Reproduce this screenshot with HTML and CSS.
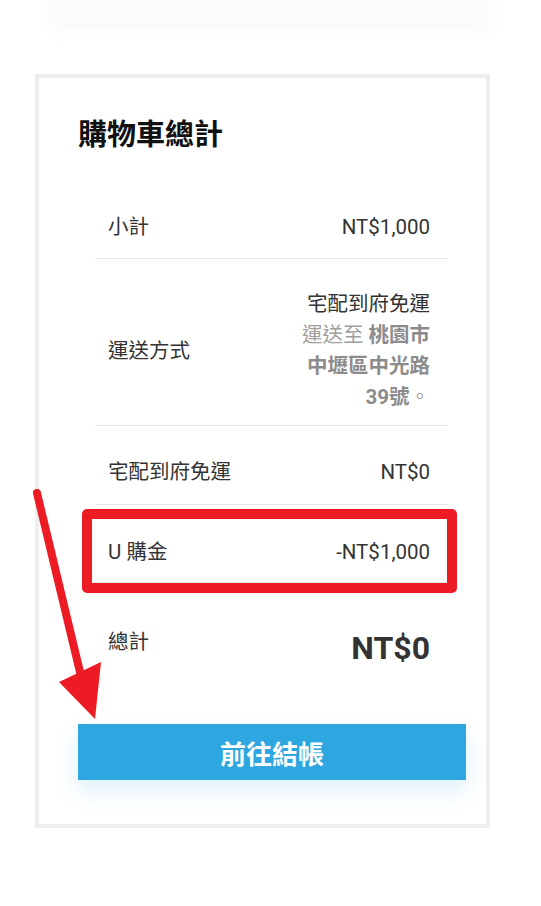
FILE: index.html
```html
<!DOCTYPE html>
<html lang="zh-TW">

<head>
    <meta charset="UTF-8">
    <meta name="viewport" content="width=device-width, initial-scale=1.0">
    <title>購物車總計</title>
    <link rel="stylesheet" href="styles.css">
</head>

<body>
    <div class="prev-card"></div>

    <div class="cart-totals">
        <h2>購物車總計</h2>

        <div class="totals">
            <div class="row row-subtotal">
                <span>小計</span>
                <span>NT$1,000</span>
            </div>
            <div class="row row-shipping">
                <span>運送方式</span>
                <span class="ship-info">宅配到府免運<br><span class="ship-to">運送至 <strong>桃園市<br>中壢區中光路<br>39號</strong>。</span></span>
            </div>
            <div class="row row-fee">
                <span>宅配到府免運</span>
                <span>NT$0</span>
            </div>
            <div class="row row-credit">
                <span>U 購金</span>
                <span>-NT$1,000</span>
                <span class="highlight"></span>
            </div>
            <div class="row row-total">
                <span>總計</span>
                <strong class="total-amount">NT$0</strong>
            </div>
        </div>

        <button type="button" class="checkout">前往結帳</button>
    </div>

    <!-- 標註箭頭 -->
    <svg class="arrow" width="541" height="906" viewBox="0 0 541 906">
        <line x1="37" y1="493" x2="80" y2="672" stroke="#ed1c24" stroke-width="8" stroke-linecap="round" />
        <polygon points="59,682 101,662 95,719" fill="#ed1c24" />
    </svg>
</body>

</html>
```

FILE: styles.css
```css
body {
    margin: 0;
    background-color: #fff;
    font-family: Roboto, "Noto Sans CJK TC", sans-serif;
    color: #333;
    position: relative;
}

.prev-card {
    height: 22px;
    margin: 0 60px;
    background-color: #fafbfc;
    box-shadow: 0 0 16px 8px rgba(246, 248, 250, 0.9);
}

.cart-totals {
    box-sizing: border-box;
    width: 455px;
    margin: 52px 0 0 35px;
    padding: 37px 20px 44px 39px;
    border: 4px solid #eeeeee;
    background-color: #fff;
}

h2 {
    margin: 0 0 29px;
    font-size: 29px;
    line-height: 40px;
    font-weight: 700;
    color: #111;
}

.totals {
    margin: 0 18px 0 17px;
}

.row {
    display: flex;
    justify-content: space-between;
    align-items: center;
    font-size: 20.5px;
    line-height: 26px;
    border-bottom: 1px solid #e6e6e6;
    padding: 0 18px 0 13px;
}

.row-subtotal {
    padding-top: 30px;
    padding-bottom: 18px;
}

.row-shipping {
    padding-top: 30px;
    padding-bottom: 12px;
}

.ship-info {
    text-align: right;
    font-size: 20.5px;
    line-height: 31px;
}

.ship-to {
    color: #a0a0a0;
}

.ship-to strong {
    color: #8c8c8c;
    font-weight: 700;
}

.row-fee {
    padding-top: 33px;
    padding-bottom: 19px;
}

.row-credit {
    position: relative;
    padding-top: 34px;
    padding-bottom: 17px;
}

.highlight {
    position: absolute;
    left: -13px;
    right: -9px;
    top: 4px;
    bottom: -11px;
    border: 10px solid #ed1c24;
    border-radius: 5px;
}

.row-total {
    align-items: flex-start;
    border-bottom: none;
    padding-top: 46px;
}

.total-amount {
    font-size: 32px;
    line-height: 40px;
    font-weight: 700;
    color: #333;
    margin-top: -1px;
}

.checkout {
    display: block;
    width: 100%;
    height: 56px;
    margin-top: 56px;
    border: none;
    background-color: #2ea6df;
    color: #fff;
    font-family: Roboto, "Noto Sans CJK TC", sans-serif;
    font-size: 26px;
    font-weight: 700;
    box-shadow: 0 10px 22px rgba(46, 166, 223, 0.16);
    cursor: pointer;
}

.arrow {
    position: absolute;
    left: 0;
    top: 0;
    pointer-events: none;
}
```
